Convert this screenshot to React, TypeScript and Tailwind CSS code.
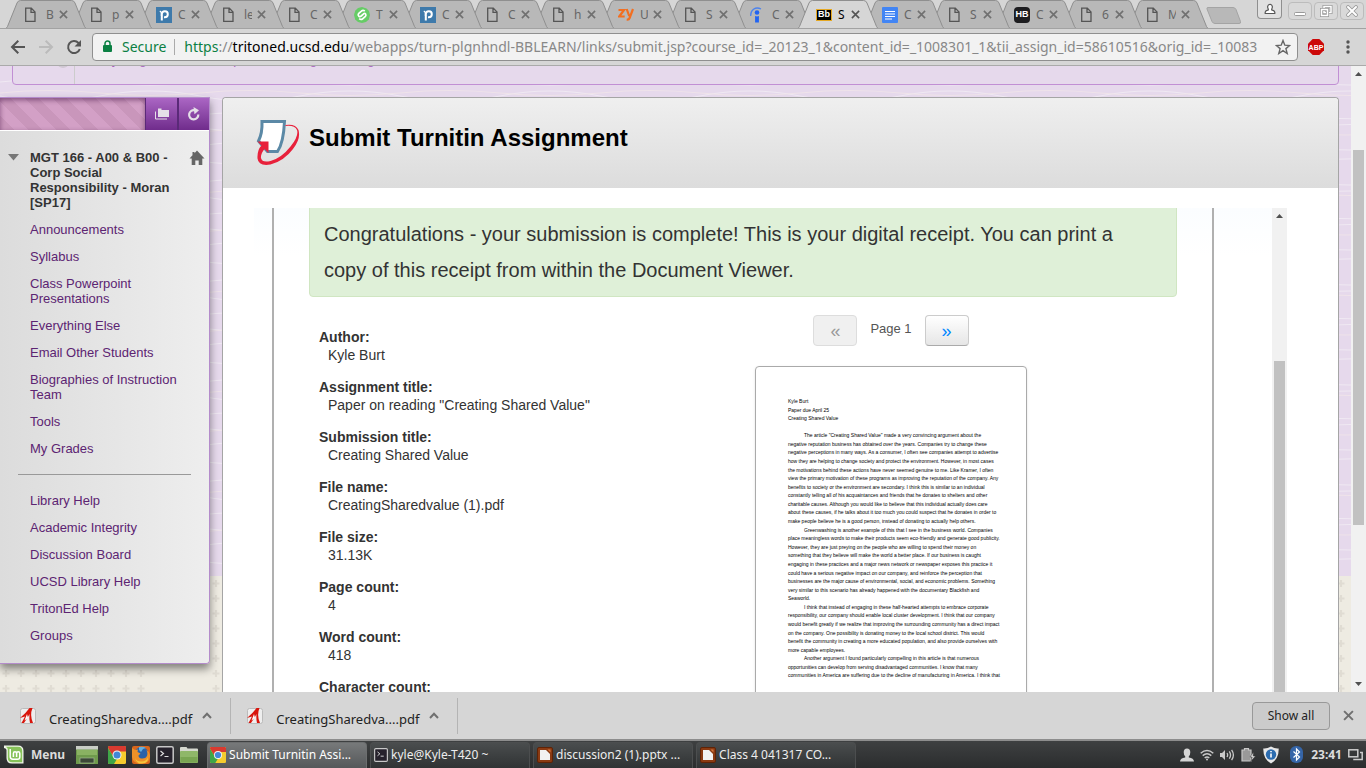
import React from 'react';

type TabKind = 'file' | 'piazza' | 'slader' | 'zy' | 'info' | 'bb' | 'doc' | 'hb';

const tabs: { kind: TabKind; label: string; active?: boolean }[] = [
  { kind: 'file', label: 'B' },
  { kind: 'file', label: 'p' },
  { kind: 'piazza', label: 'C' },
  { kind: 'file', label: 'le' },
  { kind: 'file', label: 'C' },
  { kind: 'slader', label: 'T' },
  { kind: 'piazza', label: 'C' },
  { kind: 'file', label: 'C' },
  { kind: 'file', label: 'h' },
  { kind: 'zy', label: 'U' },
  { kind: 'file', label: 'S' },
  { kind: 'info', label: 'C' },
  { kind: 'bb', label: 'S', active: true },
  { kind: 'doc', label: 'C' },
  { kind: 'file', label: 'S' },
  { kind: 'hb', label: 'C' },
  { kind: 'file', label: '6' },
  { kind: 'file', label: 'M' },
];

const courseLinks = [
  'Announcements',
  'Syllabus',
  'Class Powerpoint Presentations',
  'Everything Else',
  'Email Other Students',
  'Biographies of Instruction Team',
  'Tools',
  'My Grades',
];

const helpLinks = ['Library Help', 'Academic Integrity', 'Discussion Board', 'UCSD Library Help', 'TritonEd Help', 'Groups'];

const receipt: [string, string][] = [
  ['Author:', 'Kyle Burt'],
  ['Assignment title:', 'Paper on reading "Creating Shared Value"'],
  ['Submission title:', 'Creating Shared Value'],
  ['File name:', 'CreatingSharedvalue (1).pdf'],
  ['File size:', '31.13K'],
  ['Page count:', '4'],
  ['Word count:', '418'],
  ['Character count:', ''],
];

const paper: { text: string; indent?: boolean }[] = [
  { text: 'Kyle Burt' },
  { text: 'Paper due April 25' },
  { text: 'Creating Shared Value' },
  { text: '' },
  { text: 'The article "Creating Shared Value" made a very convincing argument about the', indent: true },
  { text: 'negative reputation business has obtained over the years. Companies try to change these' },
  { text: 'negative perceptions in many ways. As a consumer, I often see companies attempt to advertise' },
  { text: 'how they are helping to change society and protect the environment. However, in most cases' },
  { text: 'the motivations behind these actions have never seemed genuine to me. Like Kramer, I often' },
  { text: 'view the primary motivation of these programs as improving the reputation of the company. Any' },
  { text: 'benefits to society or the environment are secondary. I think this is similar to an individual' },
  { text: 'constantly telling all of his acquaintances and friends that he donates to shelters and other' },
  { text: 'charitable causes. Although you would like to believe that this individual actually does care' },
  { text: 'about these causes, if he talks about it too much you could suspect that he donates in order to' },
  { text: 'make people believe he is a good person, instead of donating to actually help others.' },
  { text: 'Greenwashing is another example of this that I see in the business world. Companies', indent: true },
  { text: 'place meaningless words to make their products seem eco-friendly and generate good publicity.' },
  { text: 'However, they are just preying on the people who are willing to spend their money on' },
  { text: 'something that they believe will make the world a better place. If our business is caught' },
  { text: 'engaging in these practices and a major news network or newspaper exposes this practice it' },
  { text: 'could have a serious negative impact on our company, and reinforce the perception that' },
  { text: 'businesses are the major cause of environmental, social, and economic problems. Something' },
  { text: 'very similar to this scenario has already happened with the documentary Blackfish and' },
  { text: 'Seaworld.' },
  { text: 'I think that instead of engaging in these half-hearted attempts to embrace corporate', indent: true },
  { text: 'responsibility, our company should enable local cluster development. I think that our company' },
  { text: 'would benefit greatly if we realize that improving the surrounding community has a direct impact' },
  { text: 'on the company. One possibility is donating money to the local school district. This would' },
  { text: 'benefit the community in creating a more educated population, and also provide ourselves with' },
  { text: 'more capable employees.' },
  { text: 'Another argument I found particularly compelling in this article is that numerous', indent: true },
  { text: 'opportunities can develop from serving disadvantaged communities. I know that many' },
  { text: 'communities in America are suffering due to the decline of manufacturing in America.  I think that' },
];

function Favicon({ kind }: { kind: TabKind }) {
  switch (kind) {
    case 'file':
      return (
        <svg width="16" height="16" viewBox="0 0 16 16" fill="none" stroke="#555" strokeWidth="1.3">
          <path d="M1.7 1.2h5.6l3.7 3.7v9.4H1.7zM7 1.4v3.9h4" />
        </svg>
      );
    case 'piazza':
      return (
        <svg width="16" height="16" viewBox="0 0 16 16">
          <rect width="16" height="16" fill="#3e7aab" />
          <path d="M5.800 13.500V7a3 3 0 1 1 3 3.200H8" fill="none" stroke="#fff" strokeWidth="2" />
          <path d="M5.500 9V7.200A3.200 3.200 0 0 0 3.800 4" fill="none" stroke="#fff" strokeWidth="1.4" />
        </svg>
      );
    case 'slader':
      return (
        <svg width="16" height="16" viewBox="0 0 16 16">
          <path d="M8 0l4.500 1.600L15 4l1 4-1.200 4.400L12 15l-4 1-4-1-2.800-2.600L0 8l1.200-4.200L4 1z" fill="#66cc66" />
          <path
            d="M10.800 4.200Q9 2.600 7.400 4.200L4.600 6.600Q3.600 8 4.800 9.200 6 10 7.200 9L9.600 6.800Q10.800 6 11.600 7 12.400 8.200 11.400 9.400L8.600 11.800Q7 13.200 5.200 11.600"
            fill="none"
            stroke="#fff"
            strokeWidth="1.700"
          />
        </svg>
      );
    case 'zy':
      return (
        <svg width="16" height="16" viewBox="0 0 16 16" fill="none" stroke="#f26f21" strokeWidth="2.200">
          <path d="M.5 3h5.500L1.200 9.500h5.500M8.700 2l2.500 7M15 2l-3.400 9q-.7 1.900-2.900 1.500" />
        </svg>
      );
    case 'info':
      return (
        <svg width="16" height="16" viewBox="0 0 16 16">
          <path d="M.7 9Q.5 4.500 3.500 2.300 7-.2 11 2" fill="none" stroke="#4d83ee" strokeWidth="1.300" />
          <circle cx="7" cy="5.500" r="2.300" fill="#2164f3" />
          <path d="M5.100 9q1.900.8 3.800 0v6.500H5.100z" fill="#2164f3" />
        </svg>
      );
    case 'bb':
      return (
        <span className="flex h-3 w-4 items-center justify-center border border-[#e5a823] bg-black font-['Liberation_Sans',sans-serif] text-[9px] font-bold leading-none text-white">
          Bb
        </span>
      );
    case 'doc':
      return (
        <svg width="16" height="16" viewBox="0 0 16 16">
          <rect width="16" height="16" rx="1" fill="#4285f4" />
          <path d="M3 4.500h10M3 7h10M3 9.500h10M3 12h7" stroke="#fff" strokeWidth="1.100" />
        </svg>
      );
    case 'hb':
      return (
        <span className="flex h-4 w-4 items-center justify-center rounded-sm bg-[#1d1d20] font-['Liberation_Sans',sans-serif] text-[9px] font-bold leading-none text-white">
          HB
        </span>
      );
  }
}

function CloseIcon({ size, color }: { size: number; color: string }) {
  return (
    <svg width={size} height={size} viewBox="0 0 10 10" stroke={color} strokeWidth="1.800">
      <path d="M1 1l8 8M9 1l-8 8" />
    </svg>
  );
}

function TabStrip() {
  return (
    <div className="flex h-[29px] shrink-0 overflow-hidden border-b border-[#a2a2a2] bg-[#d6d6d6] pl-1.5">
      {tabs.map((tab, i) => (
        <div key={i} className="relative -mr-3.5 h-[29px] w-20 shrink-0" style={{ zIndex: tab.active ? 30 : 20 - i }}>
          <svg className="absolute inset-0" width="80" height="29" viewBox="0 0 80 29">
            <path
              d="M0 28.500L1.500 26.500 11 3Q12 .5 14.500.5H65.500Q68 .5 69 3L78.500 26.500 80 28.500"
              fill={tab.active ? '#d6d6d6' : '#b8b8b8'}
              stroke="#8f8f8f"
            />
            {tab.active && <path d="M1 28.500h78" stroke="#d6d6d6" />}
          </svg>
          <div className="relative flex h-[29px] items-center pl-[18px]">
            <Favicon kind={tab.kind} />
            <button
              className={
                tab.active
                  ? "ml-1 w-2.5 overflow-hidden pl-0.5 text-left font-['Noto_Sans',sans-serif] text-xs text-black"
                  : "ml-1 w-2.5 overflow-hidden pl-0.5 text-left font-['Noto_Sans',sans-serif] text-xs text-[#666]"
              }
            >
              {tab.label}
            </button>
            <button aria-label="Close tab" className="ml-[5px]">
              <CloseIcon size={9} color={tab.active ? '#555' : '#707070'} />
            </button>
          </div>
        </div>
      ))}
      <button aria-label="New tab" className="ml-3 mt-[7px] h-[18px]">
        <svg width="36" height="18" viewBox="0 0 36 18">
          <path d="M2 .5h25q2 0 3 2l4.500 12q.7 2-1.500 2H9q-2 0-3-2L1 2Q.5.5 2 .5z" fill="#b8b8b8" stroke="#a4a4a4" />
        </svg>
      </button>
      <div className="ml-auto flex shrink-0 gap-0.5 pr-0.5">
        <button aria-label="User" className="mr-1 flex h-[19px] w-[25px] items-center justify-center rounded-b border border-t-0 border-[#8f8f8f] bg-[#e0e0e0]">
          <svg width="12" height="12" viewBox="0 0 12 12" fill="#fff" stroke="#555" strokeWidth="1.200">
            <path d="M1.200 10.500V9.200Q1.500 7.500 4.300 6.900V6Q3.500 5 3.700 3.300 4 1.300 6 1.300T8.300 3.300Q8.500 5 7.700 6v.9q2.800.6 3.100 2.300v1.300z" />
          </svg>
        </button>
        {['Minimize', 'Restore', 'Close'].map((name) => (
          <button key={name} aria-label={name} className="mt-0.5 flex h-[18px] w-6 items-center justify-center rounded-sm border border-[#bcbcbc] bg-[#d9d9d9]">
            <svg width="14" height="14" viewBox="0 0 14 14" fill="none">
              {name === 'Minimize' && <rect x="1.500" y="8.500" width="11" height="3" rx="1" fill="#fff" stroke="#999" />}
              {name === 'Restore' && (
                <>
                  <rect x="5" y="2.500" width="7" height="6" stroke="#999" strokeWidth="3" />
                  <rect x="5" y="2.500" width="7" height="6" stroke="#fff" strokeWidth="1.500" />
                  <rect x="2.500" y="5.500" width="6" height="6" stroke="#999" strokeWidth="3" />
                  <rect x="2.500" y="5.500" width="6" height="6" stroke="#fff" strokeWidth="1.500" />
                </>
              )}
              {name === 'Close' && (
                <>
                  <path d="M3 3l8 8M11 3l-8 8" stroke="#999" strokeWidth="3.800" strokeLinecap="round" />
                  <path d="M3 3l8 8M11 3l-8 8" stroke="#fff" strokeWidth="2" strokeLinecap="round" />
                </>
              )}
            </svg>
          </button>
        ))}
      </div>
    </div>
  );
}

function Toolbar() {
  return (
    <div className="flex h-[37px] shrink-0 items-center border-b border-[#aaa] bg-[#d6d6d6] pb-px pl-2.5 pr-4 font-['Noto_Sans',sans-serif]">
      <button aria-label="Back" className="mr-3">
        <svg width="16" height="16" viewBox="0 0 16 16" fill="none" stroke="#555" strokeWidth="2">
          <path d="M15 8H2.500M8.300 1.700L2 8l6.300 6.300" />
        </svg>
      </button>
      <button aria-label="Forward" className="mr-3">
        <svg width="16" height="16" viewBox="0 0 16 16" fill="none" stroke="#bbb" strokeWidth="2">
          <path d="M1 8h12.500M7.700 1.700L14 8l-6.300 6.300" />
        </svg>
      </button>
      <button aria-label="Reload" className="mr-2.5">
        <svg width="16" height="16" viewBox="0 0 16 16" fill="none" stroke="#555" strokeWidth="2">
          <path d="M13.800 10A6 6 0 1 1 12.500 4l1.200 1.300" />
          <path d="M15 1v6.500H8.500z" fill="#555" stroke="none" />
        </svg>
      </button>
      <div className="flex h-7 min-w-0 flex-1 items-center rounded-sm border border-[#8f8f8f] bg-[#f2f2f2] pl-2.5 pr-1.5 text-sm">
        <svg className="shrink-0" width="9" height="13" viewBox="0 0 9 13">
          <rect y="5" width="9" height="7" rx="1" fill="#0b8043" />
          <path d="M2 5.500V3.500a2.500 2.500 0 0 1 5 0v2" fill="none" stroke="#0b8043" strokeWidth="1.500" />
        </svg>
        <span className="ml-2.5 text-[#0b8043]">Secure</span>
        <span className="ml-2 h-4 w-px shrink-0 bg-[#aaa]" />
        <span className="ml-[9px] min-w-0 flex-1 overflow-hidden whitespace-nowrap text-[#888]">
          <span className="text-[#0b8043]">https</span>://<span className="text-black">tritoned.ucsd.edu</span>
          /webapps/turn-plgnhndl-BBLEARN/links/submit.jsp?course_id=_20123_1&amp;content_id=_1008301_1&amp;tii_assign_id=58610516&amp;orig_id=_10083
        </span>
        <button aria-label="Bookmark" className="ml-1.5 shrink-0">
          <svg width="16" height="16" viewBox="0 0 16 16" fill="none" stroke="#666" strokeWidth="1.400">
            <path d="M8 1.500l1.800 4.700 4.900.3-3.800 3.100 1.300 4.900L8 11.700l-4.200 2.800 1.300-4.900L1.300 6.500l4.900-.3z" />
          </svg>
        </button>
      </div>
      <button aria-label="Adblock Plus" className="ml-2.5">
        <svg width="16" height="16" viewBox="0 0 16 16">
          <path d="M4.700 0h6.600L16 4.700v6.600L11.300 16H4.700L0 11.300V4.700z" fill="#cc0808" />
          <text x="8" y="10.800" textAnchor="middle" fontFamily="Liberation Sans, sans-serif" fontSize="7" fontWeight="bold" fill="#fff">
            ABP
          </text>
        </svg>
      </button>
      <button aria-label="Menu" className="ml-[22px]">
        <svg width="4" height="14" viewBox="0 0 4 14" fill="#555">
          <circle cx="2" cy="2" r="1.700" />
          <circle cx="2" cy="7" r="1.700" />
          <circle cx="2" cy="12" r="1.700" />
        </svg>
      </button>
    </div>
  );
}

function Backdrop() {
  return (
    <div className="absolute inset-0 flex flex-col">
      <svg className="w-full shrink-0" height="510">
        <defs>
          <pattern id="waves" width="200" height="100" patternUnits="userSpaceOnUse">
            <rect width="200" height="100" fill="#e6d9ec" />
            <g fill="none" stroke="#f0e9f3" strokeWidth="1.200">
              <path d="M0 16q50-6 100 0t100 0M0 30q50 10 100 0t100 0M0 49q40-5 100 1t100-1M0 62q50 7 100 0t100 0M0 80q50-8 100 0t100 0M0 95q50 7 100 1t100-1" />
              <path d="M0 27q50-5 100 0t100 0M0 66q60-6 100 0t100 0" stroke="#efe3ea" />
            </g>
          </pattern>
        </defs>
        <rect width="100%" height="100%" fill="url(#waves)" />
      </svg>
      <svg className="w-full flex-1">
        <defs>
          <pattern id="plus" width="15" height="15" patternUnits="userSpaceOnUse">
            <path d="M6 4v7M2.500 7.500h7" stroke="#e0dcd3" strokeWidth="2.200" />
          </pattern>
        </defs>
        <rect width="100%" height="100%" fill="#eeebe2" />
        <rect width="148" height="100%" fill="url(#plus)" />
        <rect x="210" width="100%" height="100%" fill="url(#plus)" />
      </svg>
    </div>
  );
}

function Sidebar() {
  return (
    <nav className="w-[210px] shrink-0 self-start rounded-br border-b border-r border-t border-[#b48ccb] shadow-[0_5px_8px_rgba(0,0,0,0.45)]">
      <div className="flex h-8">
        <div className="flex-1 bg-[repeating-linear-gradient(45deg,#c996bb_0px,#c996bb_10px,#d3a0c6_10px,#d3a0c6_20px)] shadow-[inset_0_2px_5px_rgba(80,30,80,0.6)]" />
        <button aria-label="Course folder view" className="flex w-8 items-center justify-center border-l border-[#5a2a78] bg-gradient-to-b from-[#ab66c4] to-[#702c8c]">
          <svg width="16" height="14" viewBox="0 0 16 14">
            <path d="M4 3V1.500h3.500V3H15v7H4z" fill="#e5e0e8" />
            <path d="M1.500 4.500v7.500H13" fill="none" stroke="#e5e0e8" />
          </svg>
        </button>
        <button aria-label="Refresh" className="flex w-8 items-center justify-center border-l-2 border-[#5a2a78] bg-gradient-to-b from-[#ab66c4] to-[#702c8c]">
          <svg width="14" height="14" viewBox="0 0 14 14" fill="none" stroke="#e5e0e8" strokeWidth="2.200">
            <path d="M11.300 7.500A4.600 4.600 0 1 1 8 3.400" />
            <path d="M6.500 0l5.500 3.200-4.500 4z" fill="#e5e0e8" stroke="none" />
          </svg>
        </button>
      </div>
      <div className="rounded-br border-t border-white bg-gradient-to-r from-[#dcdcdc] to-[#eeeeee] pb-5 pt-[19px] text-[13px] leading-[15px]">
        <div className="flex items-start pl-2">
          <svg className="mt-1 shrink-0" width="11" height="7" viewBox="0 0 11 7">
            <path d="M0 0h11L5.500 6.500z" fill="#777" />
          </svg>
          <h2 className="ml-[11px] w-[150px] font-bold text-[#333]">MGT 166 - A00 &amp; B00 - Corp Social Responsibility - Moran [SP17]</h2>
          <svg className="ml-[9px] shrink-0" width="16" height="16" viewBox="0 0 16 16">
            <path d="M8 .5L15.500 8.500H13.300V15H9.700v-4.500H6.300V15H2.700V8.500H.5L3.500 5.300V2h2v1.200z" fill="#666" />
          </svg>
        </div>
        <ul className="mt-3 flex flex-col gap-3 pl-[30px] pr-6">
          {courseLinks.map((t) => (
            <li key={t}>
              <a href="#" className="block text-[#5c2472]">{t}</a>
            </li>
          ))}
        </ul>
        <hr className="mx-[18px] mb-[18px] mt-[18px] border-[#999]" />
        <ul className="flex flex-col gap-3 pl-[30px] pr-6">
          {helpLinks.map((t) => (
            <li key={t}>
              <a href="#" className="block text-[#5c2472]">{t}</a>
            </li>
          ))}
        </ul>
      </div>
    </nav>
  );
}

function ScrollArrow({ down }: { down?: boolean }) {
  return (
    <svg className="shrink-0" width="15" height="16" viewBox="0 0 15 16">
      <path d={down ? 'M4 6h7L7.500 10z' : 'M4 10h7L7.500 6z'} fill="#505050" />
    </svg>
  );
}

function Viewer() {
  return (
    <div className="ml-[31px] mr-[51px] mt-5 flex min-h-0 flex-1 overflow-hidden bg-gradient-to-b from-[#fbfdff] to-white to-10%">
      <div className="ml-[18px] mr-[58px] h-[600px] flex-1 border-x-2 border-[#b0b0b0] px-[35px]">
        <p className="-mt-2 rounded border border-[#d0e6c2] bg-[#dff0d8] pb-2 pl-3.5 pr-12 pt-[15px] text-xl leading-9 text-[#333]">
          Congratulations - your submission is complete! This is your digital receipt. You can print a copy of this receipt from within the
          Document Viewer.
        </p>
        <div className="grid grid-cols-[296px_1fr]">
          <dl className="flex flex-col gap-3.5 whitespace-nowrap pl-2.5 pt-[31px] text-sm leading-[18px] text-[#333]">
            {receipt.map(([k, v]) => (
              <div key={k}>
                <dt className="font-bold">{k}</dt>
                <dd className="pl-[9px]">{v}</dd>
              </div>
            ))}
          </dl>
          <div className="flex flex-col items-center pt-[18px]">
            <div className="flex h-[31px] items-start">
              <button disabled aria-label="Previous page" className="h-[31px] w-11 rounded border border-[#ddd] bg-[#f0f0f0] text-lg leading-7 text-[#999]">
                «
              </button>
              <span className="mx-[13px] text-[13px] leading-7 text-[#555]">Page 1</span>
              <button aria-label="Next page" className="h-[31px] w-11 rounded border border-[#ccc] border-b-[#aaa] bg-gradient-to-b from-white to-[#e6e6e6] text-lg leading-7 text-[#0088ff]">
                »
              </button>
            </div>
            <div className="mt-5 h-[352px] w-[272px] rounded border border-[#aaa] bg-white pl-8 pt-[30px] shadow-sm">
              <div className="grid h-[283px] auto-rows-fr whitespace-nowrap text-[5px] leading-[8px] text-black">
                {paper.map((line, i) => (
                  <p key={i} className={line.indent ? 'pl-4' : ''}>
                    {line.text}
                  </p>
                ))}
              </div>
            </div>
          </div>
        </div>
      </div>
      <div className="flex w-[15px] flex-col bg-[#f1f1f1]">
        <ScrollArrow />
        <div className="mx-0.5 mt-[137px] flex-1 bg-[#c1c1c1]" />
      </div>
    </div>
  );
}

function PageArea() {
  return (
    <div className="flex min-h-0 flex-1 overflow-hidden">
      <div className="relative flex min-w-0 flex-1 flex-col overflow-hidden">
        <Backdrop />
        <div className="relative -mt-[15px] ml-3 mr-3 flex h-[34px] shrink-0 overflow-hidden rounded-b-sm border border-[#c18fd4] bg-[#e6d9ec] text-[13px] leading-[15px] text-[#a661bd]">
          <div className="flex w-[62px] gap-4 border-r border-[#ccc] pl-3.5 font-bold text-[#8a2fb0]">
            <span className="pt-0.5">88</span>
            <span className="mt-1 h-3 w-3 rounded-full bg-[#d0c8d3]" />
          </div>
          <a href="#" className="ml-2.5">Everything Else</a>
          <a href="#" className="ml-[42px]">Paper on reading "Creating Shared Value"</a>
        </div>
        <div className="relative mt-3 flex min-h-0 flex-1 pr-3">
          <Sidebar />
          <main className="ml-3 flex min-w-0 flex-1 flex-col self-stretch rounded-t border border-b-0 border-[#a5a5a5] bg-white">
            <header className="flex h-[90px] shrink-0 rounded-t bg-gradient-to-b from-[#efefef] to-[#dcdcdc] pl-[33px] pt-5">
              <svg className="shrink-0" width="46" height="48" viewBox="0 0 46 48">
                <path d="M6 3.500h22.500Q27.500 25 21.500 33.500H11.500L2.500 23Q6.500 15 6 3.500z" fill="#fff" stroke="#5b89a6" strokeWidth="3" />
                <path
                  d="M29.500 7q10-1.500 13 5 2.500 9-5.500 19Q28 43 14.500 46.500q-12 2-13-6Q1 32 5.500 27.500L1.500 23.500h11V35l-4-4Q4.500 36 5 40q1 5 9.500 3 11-3 20-14.500Q43 18 41 12 38.500 7 29.500 8z"
                  fill="#e8213b"
                />
              </svg>
              <h1 className="ml-[7px] pt-1 text-2xl font-bold text-black">Submit Turnitin Assignment</h1>
            </header>
            <Viewer />
          </main>
        </div>
      </div>
      <div className="flex w-[15px] flex-col bg-[#f1f1f1]">
        <ScrollArrow />
        <div className="mx-0.5 mt-[68px] h-[375px] bg-[#c1c1c1]" />
        <div className="flex-1" />
        <ScrollArrow down />
      </div>
    </div>
  );
}

function DownloadBar() {
  return (
    <div className="flex h-[49px] shrink-0 items-center border-b-2 border-[#8d8d8d] bg-[#d6d6d6] pr-3 font-['Noto_Sans',sans-serif] text-[13px] text-[#222]">
      {[0, 1].map((i) => (
        <div key={i} className="flex h-9 items-center border-r border-[#b4b4b4] pl-5 pr-[18px] nth-[2]:pl-4">
          <svg width="16" height="16" viewBox="0 0 16 16">
            <rect x=".5" y=".5" width="15" height="15" rx="2" fill="#eee" stroke="#bbb" />
            <path d="M0 10Q6 5 9.500 0h3q-3 7 .5 15h-3Q9 11 9.500 6 8 9 4 15H1.500L5 8.500z" fill="#d8150c" />
            <path d="M7 6L4.500 12.500 8 10z" fill="#fff" />
          </svg>
          <span className="ml-[13px] pt-2">CreatingSharedva....pdf</span>
          <button aria-label="Download options" className="ml-2.5">
            <svg width="10" height="7" viewBox="0 0 10 7" fill="none" stroke="#707070" strokeWidth="2">
              <path d="M1 6l4-4.300L9 6" />
            </svg>
          </button>
        </div>
      ))}
      <button className="ml-auto h-7 w-[78px] rounded-sm border border-[#999] bg-[#cbcbcb] text-xs">Show all</button>
      <button aria-label="Close downloads" className="ml-[13px]">
        <CloseIcon size={11} color="#707070" />
      </button>
    </div>
  );
}

function ChromeIcon({ size }: { size: number }) {
  return (
    <svg className="shrink-0" width={size} height={size} viewBox="0 0 18 18">
      <rect width="18" height="18" rx="1.500" fill="#f6cc2e" />
      <path d="M0 1.500Q0 0 1.500 0h15Q18 0 18 1.500V5.500H9L5.500 11 0 2z" fill="#d93a30" />
      <path d="M0 2l5.500 9L9 13l-3 5H1.500Q0 18 0 16.500z" fill="#3fa648" />
      <circle cx="9" cy="9" r="4.500" fill="#f4f4f4" />
      <circle cx="9" cy="9" r="3.500" fill="#4387d6" />
    </svg>
  );
}

function TerminalIcon({ size }: { size: number }) {
  return (
    <svg className="shrink-0" width={size} height={size} viewBox="0 0 18 18">
      <rect x=".8" y=".8" width="16.400" height="16.400" rx="1.500" fill="#26222c" stroke="#c8c8c8" strokeWidth="1.500" />
      <path d="M4.500 5l3 2.500-3 2.500M8.500 10.500h4" fill="none" stroke="#ddd" strokeWidth="1.200" />
    </svg>
  );
}

function ImpressIcon() {
  return (
    <svg className="shrink-0" width="16" height="16" viewBox="0 0 16 16">
      <rect x=".5" y=".5" width="15" height="15" rx="1.500" fill="#8a3a12" stroke="#5f2306" />
      <path d="M3 3h6l4 4v6H3z" fill="#f2f2f2" />
      <path d="M10.500 2.500h3v3z" fill="#d97840" />
    </svg>
  );
}

const tasks = [
  { label: 'Submit Turnitin Assi...', icon: <ChromeIcon size={16} />, active: true },
  { label: 'kyle@Kyle-T420 ~', icon: <TerminalIcon size={14} />, active: false },
  { label: 'discussion2 (1).pptx ...', icon: <ImpressIcon />, active: false },
  { label: 'Class 4 041317 CO...', icon: <ImpressIcon />, active: false },
];

function Taskbar() {
  return (
    <div className="flex h-[27px] shrink-0 items-center bg-gradient-to-b from-[#3e4041] to-[#2b2d2e] pl-1 pr-[3px] font-['Noto_Sans',sans-serif] text-xs text-[#eee]">
      <button className="flex items-center gap-[7px] text-xs font-bold text-[#ddd]">
        <svg width="20" height="19" viewBox="0 0 20 19">
          <path d="M0 .5h14q5.500 0 5.500 5.500v12.500H8Q2.500 18.500 2.500 13V5Q2.500 3.500 0 3z" fill="#f0f5ea" />
          <path d="M2 1.700h12q4.200 0 4.200 4.300v11.200H8.500Q3.800 17.200 3.800 12.700V4.500Q3.800 2.500 2 2z" fill="#87c25a" />
          <path d="M6.200 4v7.500q0 2.700 2.700 2.700h4.600q2.300 0 2.300-2.300V8.500q0-1.700-1.600-1.700t-1.600 1.700V12M12.600 8.500q0-1.700-1.600-1.700T9.400 8.500V12" fill="none" stroke="#fff" strokeWidth="1.500" />
        </svg>
        Menu
      </button>
      <div className="ml-[11px] flex items-center gap-1.5">
        <button aria-label="Show desktop" className="mr-1">
          <svg width="22" height="18" viewBox="0 0 22 18">
            <rect width="22" height="18" fill="#6f9a4c" />
            <rect width="22" height="3.500" fill="#c9cdc6" />
            <rect x="1" y="4" width="20" height="5" fill="#8ab262" />
            <rect x="4" y="12" width="14" height="5" fill="#3c4838" stroke="#a0b890" strokeWidth=".7" />
          </svg>
        </button>
        <button aria-label="Chrome"><ChromeIcon size={18} /></button>
        <button aria-label="Firefox">
          <svg width="18" height="18" viewBox="0 0 18 18">
            <rect width="18" height="18" rx="2" fill="#d8661c" />
            <circle cx="9.500" cy="8" r="7" fill="#2a62a8" />
            <path d="M7 1q4-1 7 1l-3 1-2 3-2-2z" fill="#64b0e0" />
            <path d="M0 2l3 2 3-.5L5.500 6l3 1.500-2 2q0 2.500 3 3 4 .5 5.500-2.500 1-3-.5-6 4 2 3.500 7-1 6-8 7Q1 18 0 11z" fill="#ee9127" />
            <path d="M3 12q2 4 7 3.500 4 0 6-4 0 4-3 5.500l-6 .5Q4 16 3 12z" fill="#f6c63c" />
          </svg>
        </button>
        <button aria-label="Terminal"><TerminalIcon size={18} /></button>
        <button aria-label="Files">
          <svg width="18" height="16" viewBox="0 0 18 16">
            <path d="M0 1q0-1 1-1h5.500l1 1.500H17q1 0 1 1V8H0z" fill="#d5d8cf" />
            <rect y="4" width="18" height="12" rx="1" fill="#8fb769" />
            <rect x=".5" y="10" width="17" height="5.500" fill="#79a552" />
          </svg>
        </button>
      </div>
      <div className="ml-[9px] flex gap-[3px] self-stretch pt-px">
        {tasks.map((t) => (
          <button
            key={t.label}
            className={
              t.active
                ? 'flex w-40 items-center gap-[3px] rounded-t border border-b-0 border-[#6c6e6f] bg-gradient-to-b from-[#77797a] to-[#55585a] pb-0.5 pl-0.5 text-white'
                : 'flex w-40 items-center gap-[3px] rounded-t border border-b-0 border-[#4c4e4f] bg-gradient-to-b from-[#4a4d4e] to-[#303334] pb-0.5 pl-[3px]'
            }
          >
            {t.icon}
            {t.label}
          </button>
        ))}
      </div>
      <div className="ml-auto flex shrink-0 items-center">
        <svg width="14" height="14" viewBox="0 0 14 14" fill="#d5d5d5">
          <path d="M7 .5q3.300 0 3.300 3.800Q10.300 7 8.800 8.300v1.200q5 .6 5.200 4H0q.2-3.400 5.200-4V8.300Q3.700 7 3.700 4.300 3.700.5 7 .5z" />
        </svg>
        <svg className="ml-1.5" width="14" height="12" viewBox="0 0 14 12" fill="none" stroke="#c9c9c9" strokeWidth="1.500">
          <path d="M.7 4.200q6.300-5.400 12.600 0M2.700 6.600q4.300-3.600 8.600 0M4.700 9q2.300-2 4.600 0" />
          <circle cx="7" cy="10.500" r="1" fill="#c9c9c9" stroke="none" />
        </svg>
        <svg className="ml-1.5" width="15" height="12" viewBox="0 0 15 12" fill="none" stroke="#c9c9c9" strokeWidth="1.300">
          <path d="M0 4h2l3-3v10L2 8H0z" fill="#c9c9c9" stroke="none" />
          <path d="M7 4q1.300 2 0 4M9.300 2.300q2.500 3.700 0 7.400M11.600.8q3.600 5.200 0 10.400" />
        </svg>
        <svg className="ml-1.5" width="15" height="14" viewBox="0 0 15 14">
          <path d="M3.500 2V.5h4V2H10v11H1V2z" fill="#999" stroke="#c9c9c9" strokeWidth="1.200" />
          <path d="M12.500 4l-3.500 5h2.200l-1.500 4.500L14.500 8h-2.300z" fill="#ddd" stroke="#333" strokeWidth=".5" />
        </svg>
        <svg className="ml-[7px]" width="16" height="18" viewBox="0 0 16 18">
          <path d="M8 .5Q12 3 15.700 2.500 16 13 8 17.500 0 13 .3 2.500 4 3 8 .5z" fill="#e8e8e8" />
          <circle cx="8" cy="8.500" r="5.200" fill="#2b6cb0" />
          <path d="M8 5v1.300M8 7.500v4" stroke="#fff" strokeWidth="1.600" />
        </svg>
        <svg className="ml-[11px]" width="13" height="17" viewBox="0 0 13 17">
          <rect width="13" height="17" rx="6" fill="#3565a8" />
          <path d="M3.500 5.500l6 5.500-3 3V3l3 3-6 5.500" fill="none" stroke="#fff" strokeWidth="1.200" />
        </svg>
        <span className="ml-2 font-bold text-[#ddd]">23:41</span>
        <svg className="ml-1.5" width="15" height="12" viewBox="0 0 15 12" fill="none" stroke="#ccc" strokeWidth="1.500">
          <rect x=".8" y=".8" width="9" height="7" />
          <path d="M12 3.500h2.200v7H6V9.800" />
        </svg>
      </div>
    </div>
  );
}

export default function App() {
  return (
    <div className="flex h-screen flex-col overflow-hidden font-['Liberation_Sans',Arial,sans-serif]">
      <TabStrip />
      <Toolbar />
      <PageArea />
      <DownloadBar />
      <Taskbar />
    </div>
  );
}
